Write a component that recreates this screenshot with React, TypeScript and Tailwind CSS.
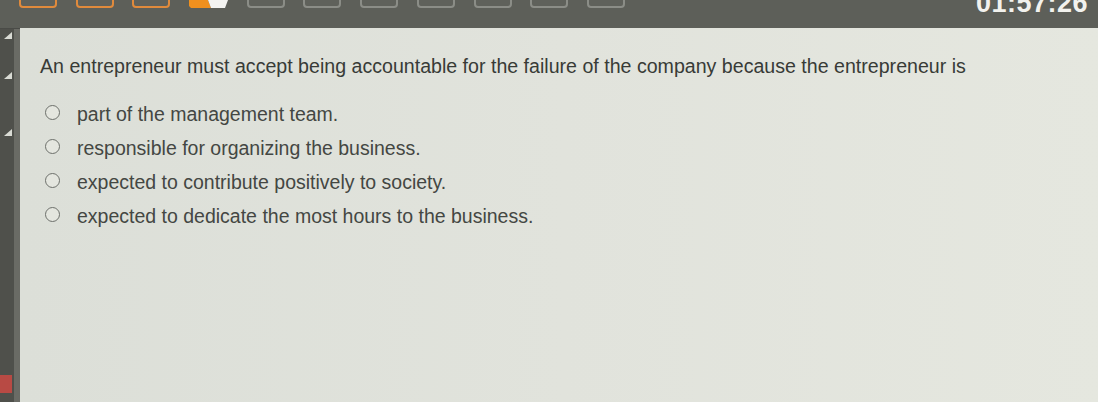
import React from "react";

const options = [
  "part of the management team.",
  "responsible for organizing the business.",
  "expected to contribute positively to society.",
  "expected to dedicate the most hours to the business.",
];

function Triangle() {
  return (
    <svg width="8" height="7" viewBox="0 0 8 7" className="block">
      <polygon points="8,0 8,7 0,7" fill="#d9dbd4" />
    </svg>
  );
}

function DoneTab() {
  return <div className="w-[38px] h-[20px] -mt-[12px] rounded-b-[4px] border-2 border-[#e08a3c] bg-[#5f615b]" />;
}

function EmptyTab() {
  return <div className="w-[38px] h-[20px] -mt-[12px] rounded-b-[4px] border-2 border-[#8b8d87] bg-[#5f615b]" />;
}

export default function App() {
  return (
    <div className="w-[1098px] h-[402px] overflow-hidden flex flex-col bg-[#5c5e58] font-['Liberation_Sans',Arial,sans-serif]">
      {/* top bar */}
      <div className="h-[28px] shrink-0 flex items-start justify-between bg-[#5d5f59]">
        <div className="flex items-start gap-[18.7px] pl-[19px]">
          <DoneTab />
          <DoneTab />
          <DoneTab />
          <svg width="39" height="9" viewBox="0 0 39 9" className="block">
            <polygon points="0,0 19,0 22,8 2,8 0,6" fill="#f0901e" />
            <polygon points="19,0 39,0 36,8 22,8" fill="#f4f4f2" />
          </svg>
          <EmptyTab />
          <EmptyTab />
          <EmptyTab />
          <EmptyTab />
          <EmptyTab />
          <EmptyTab />
          <EmptyTab />
        </div>
        <div className="-mt-[12px] pr-[10px] text-[27px] leading-[30px] font-bold text-[#f2f2ee] tracking-[0.5px]">
          01:57:26
        </div>
      </div>

      <div className="flex flex-1 min-h-0">
        {/* left strip */}
        <div className="w-[20px] shrink-0 flex border-t border-[#4a4b47]">
          <div className="w-[14px] bg-[#4f504b] flex flex-col items-end pr-[2px]">
            <div className="mt-[3px]"><Triangle /></div>
            <div className="mt-[33px]"><Triangle /></div>
            <div className="mt-[50px]"><Triangle /></div>
            <div className="mt-auto mb-[9px] w-[14px] h-[18px] bg-[#b84a44]" />
          </div>
          <div className="w-[6px] bg-[#6a6b65]" />
        </div>

        {/* question panel */}
        <div className="flex-1 bg-gradient-to-r from-[#dcdfd8] via-[#e1e3dc] to-[#e5e7df] pt-[26px] pl-[20px]">
          <p className="text-[19.6px] leading-[24px] text-[#383b37]">
            An entrepreneur must accept being accountable for the failure of the company because the entrepreneur is
          </p>
          <div className="mt-[19px] flex flex-col">
            {options.map((o) => (
              <label key={o} className="h-[34px] flex items-center">
                <span className="ml-[5px] -mt-[4px] w-[15px] h-[15px] rounded-full border-[1.5px] border-[#6d706b] bg-[#e4e6df]" />
                <span className="ml-[17px] text-[19.5px] leading-[22px] text-[#444743]">{o}</span>
              </label>
            ))}
          </div>
        </div>
      </div>
    </div>
  );
}
